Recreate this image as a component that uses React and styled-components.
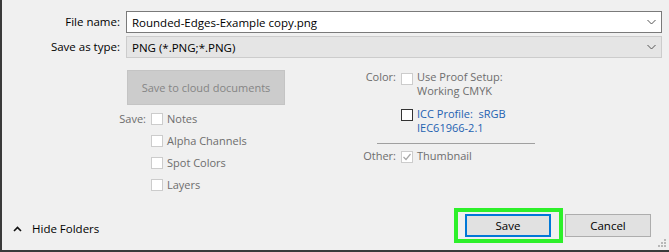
import {Fragment} from 'react'
import styled, {createGlobalStyle} from 'styled-components'

const GlobalStyle = createGlobalStyle`
  html, body { margin: 0; padding: 0; background: #f0f0f0; }
  * { box-sizing: border-box; }
`

const Dialog = styled.div`
  position: relative;
  width: 669px;
  height: 252px;
  display: flex;
  flex-direction: column;
  background: #f0f0f0;
  border-left: 2px solid #3a3a3a;
  border-bottom: 2px solid #3a3a3a;
  font-family: "Open Sans", "Noto Sans", sans-serif;
  font-size: 11px;
  color: #000;
`

const Fields = styled.div`
  display: grid;
  grid-template-columns: 118px 1fr;
  column-gap: 6px;
  row-gap: 3px;
  padding: 11px 7px 0 0;
`

const FieldLabel = styled.label`
  text-align: right;
  align-self: center;
  line-height: 22px;
  font-size: 11.5px;
`

const Field = styled.div`
  height: 22px;
  display: flex;
  align-items: center;
  justify-content: space-between;
  padding: 0 5px 0 5px;
  border: 1px solid ${p => p.$disabled ? '#cccccc' : '#7a7a7a'};
  background: ${p => p.$disabled ? '#e5e5e5' : '#ffffff'};
  color: #000;
  font-size: 11.5px;
`

const Options = styled.div`
  display: flex;
  align-items: flex-start;
  margin-top: 12px;
  padding-left: 98px;
`

const LeftColumn = styled.div`
  display: flex;
  flex-direction: column;
  width: 185px;
`

const CloudButton = styled.div`
  margin-left: 27px;
  width: 158px;
  height: 35px;
  display: flex;
  align-items: center;
  justify-content: center;
  background: #cccccc;
  color: #858585;
  border: 1px solid #c4c4c4;
`

const CheckGroup = styled.div`
  display: grid;
  grid-template-columns: ${p => p.$labelWidth}px 12px auto;
  column-gap: 5px;
  row-gap: ${p => p.$gap || 0}px;
  margin-top: ${p => p.$top || 0}px;
  align-items: start;
  line-height: 14px;
`

const OptLabel = styled.span`
  grid-column: 1;
  text-align: right;
  color: #6d6d6d;
`

const Box = styled.span`
  grid-column: 2;
  grid-row: ${p => p.$row || 1};
  width: 12px;
  height: 12px;
  margin-top: ${p => p.$offset ?? 1}px;
  border: 1px solid ${p => p.$active ? '#333333' : '#cccccc'};
  background: #fff;
  display: flex;
  align-items: center;
  justify-content: center;
`

const OptText = styled.span`
  grid-column: 3;
  grid-row: ${p => p.$row || 1};
  margin-left: -1px;
  color: ${p => p.$link ? '#2462b0' : '#6d6d6d'};
  white-space: pre;
`

const RightColumn = styled.div`
  display: flex;
  flex-direction: column;
  margin-left: 71px;
`

const Separator = styled.div`
  margin: 8px 0 5px 21px;
  width: 158px;
  height: 1px;
  background: #a0a0a0;
`

const Footer = styled.div`
  margin-top: auto;
  display: flex;
  align-items: center;
  padding: 0 18px 13px 11px;
`

const HideFolders = styled.div`
  display: flex;
  align-items: center;
  gap: 10px;
  line-height: 14px;
  padding-top: 6px;
  font-size: 11.5px;
`

const Buttons = styled.div`
  margin-left: auto;
  display: flex;
  gap: 14px;
`

const Button = styled.div`
  position: relative;
  width: 86px;
  height: 23px;
  display: flex;
  align-items: center;
  justify-content: center;
  background: #e1e1e1;
  border: ${p => p.$primary ? '2px solid #0078d7' : '1px solid #adadad'};
  color: #000;
  font-size: 11.5px;

  ${p => p.$highlight && `
    &::after {
      content: '';
      position: absolute;
      top: -8px;
      bottom: -8px;
      left: -13px;
      right: -14px;
      border: 4px solid #2df02a;
    }
  `}
`

const Grip = styled.svg`
  position: absolute;
  right: 3px;
  bottom: 3px;
`

const Chevron = () => (
  <svg width="9" height="6" viewBox="0 0 9 6">
    <path d="M0.5 1 L4.5 5 L8.5 1" fill="none" stroke="#555" strokeWidth="1" />
  </svg>
)

const Check = () => (
  <svg width="10" height="10" viewBox="0 0 10 10">
    <path d="M1.5 5 L4 7.5 L8.5 2" fill="none" stroke="#a8a8a8" strokeWidth="1.2" />
  </svg>
)

const saveOptions = ['Notes', 'Alpha Channels', 'Spot Colors', 'Layers']

export default function App() {
  return (
    <Dialog>
      <GlobalStyle />
      <Fields>
        <FieldLabel>File name:</FieldLabel>
        <Field>
          <span>Rounded-Edges-Example copy.png</span>
          <Chevron />
        </Field>
        <FieldLabel>Save as type:</FieldLabel>
        <Field $disabled>
          <span>PNG (*.PNG;*.PNG)</span>
          <Chevron />
        </Field>
      </Fields>

      <Options>
        <LeftColumn>
          <CloudButton>Save to cloud documents</CloudButton>
          <CheckGroup $labelWidth={46} $gap={8} $top={7}>
            <OptLabel>Save:</OptLabel>
            {saveOptions.map((name, i) => (
              <Fragment key={name}>
                <Box $row={i + 1} />
                <OptText $row={i + 1}>{name}</OptText>
              </Fragment>
            ))}
          </CheckGroup>
        </LeftColumn>

        <RightColumn>
          <CheckGroup $labelWidth={40}>
            <OptLabel>Color:</OptLabel>
            <Box $offset={3} />
            <OptText>{'Use Proof Setup:\nWorking CMYK'}</OptText>
          </CheckGroup>
          <CheckGroup $labelWidth={40} $top={9}>
            <Box $active $offset={2} />
            <OptText $link>{'ICC Profile:  sRGB\nIEC61966-2.1'}</OptText>
          </CheckGroup>
          <Separator />
          <CheckGroup $labelWidth={40}>
            <OptLabel>Other:</OptLabel>
            <Box $offset={2}><Check /></Box>
            <OptText>Thumbnail</OptText>
          </CheckGroup>
        </RightColumn>
      </Options>

      <Footer>
        <HideFolders>
          <svg width="9" height="6" viewBox="0 0 9 6">
            <path d="M1 5 L4.5 1.5 L8 5" fill="none" stroke="#111" strokeWidth="1.6" />
          </svg>
          <span>Hide Folders</span>
        </HideFolders>
        <Buttons>
          <Button $primary $highlight>Save</Button>
          <Button>Cancel</Button>
        </Buttons>
      </Footer>

      <Grip width="8" height="8" viewBox="0 0 8 8">
        {[[6, 0], [6, 3], [3, 3], [6, 6], [3, 6], [0, 6]].map(([x, y]) => (
          <rect key={x + '-' + y} x={x} y={y} width="2" height="2" fill="#b8b8b8" />
        ))}
      </Grip>
    </Dialog>
  )
}
